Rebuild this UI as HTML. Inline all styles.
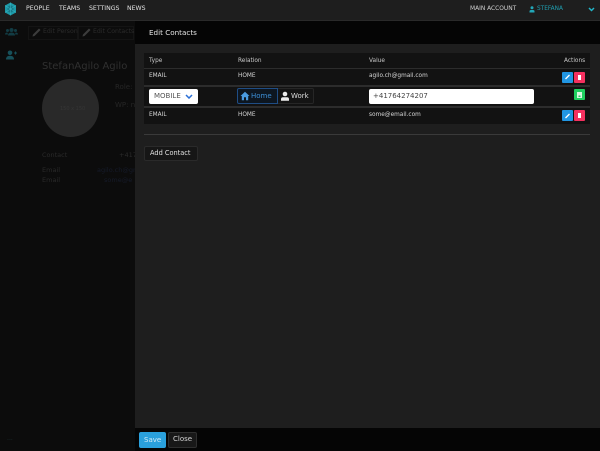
<!DOCTYPE html>
<html><head><meta charset="utf-8">
<style>
html,body{margin:0;padding:0;background:#0c0c0c}
#r{position:relative;width:600px;height:451px;overflow:hidden;background:#0c0c0c;font-family:"DejaVu Sans","Liberation Sans",sans-serif;color:#ddd}
#r div{position:absolute;white-space:nowrap}
.t{font-size:6.2px;line-height:10px;color:#d6d6d6}
svg{position:absolute;display:block}
</style></head><body>
<div id="r">
<!-- top bar -->
<div style="left:0;top:0;width:600px;height:20px;background:#1e1e1e"></div>
<div style="left:0;top:20px;width:600px;height:1px;background:#2a2a2a"></div>
<svg style="left:4px;top:2px" width="13" height="14" viewBox="0 0 13 14"><path d="M6.500 .5L12 3.500V10.500L6.500 13.500L1 10.500V3.500Z" fill="#1d9aa8"/><path d="M6.500 3L9.500 5V9L6.500 11L3.500 9V5Z" fill="#157a88"/><path d="M6.500 .5V13.500M1 3.500L12 10.500M12 3.500L1 10.500" stroke="#3fbccb" stroke-width=".5"/></svg>
<div class="t" style="left:26px;top:4px;color:#e2e2e2">PEOPLE</div>
<div class="t" style="left:59px;top:4px;color:#e2e2e2">TEAMS</div>
<div class="t" style="left:89px;top:4px;color:#e2e2e2">SETTINGS</div>
<div class="t" style="left:127px;top:4px;color:#e2e2e2">NEWS</div>
<div class="t" style="left:470px;top:4px;color:#d0d0d0;font-size:5.900px">MAIN ACCOUNT</div>
<svg style="left:529px;top:6px" width="6" height="7" viewBox="0 0 6 7"><circle cx="3" cy="1.800" r="1.500" fill="#22a7b8"/><path d="M.5 6.500V5.300Q.5 4 2 4H4Q5.500 4 5.500 5.300V6.500Z" fill="#22a7b8"/></svg>
<div class="t" style="left:537px;top:4px;color:#1f9fb0;font-size:5.800px">STEFANA</div>
<svg style="left:588px;top:7px" width="7" height="5" viewBox="0 0 7 5"><path d="M1 1L3.500 3.500L6 1" fill="none" stroke="#22b5c8" stroke-width="1.500"/></svg>

<!-- dimmed background page -->
<svg style="left:5px;top:27px" width="13" height="9" viewBox="0 0 13 9"><circle cx="6.500" cy="3" r="2" fill="#123c44"/><circle cx="2.500" cy="3.500" r="1.500" fill="#123c44"/><circle cx="10.500" cy="3.500" r="1.500" fill="#123c44"/><path d="M3 8.500Q3 5.500 6.500 5.500T10 8.500ZM0 7.500Q0 5.500 2.500 5.500L3 7.500ZM13 7.500Q13 5.500 10.500 5.500L10 7.500Z" fill="#123c44"/></svg>
<svg style="left:6px;top:50px" width="11" height="10" viewBox="0 0 11 10"><circle cx="4" cy="2.800" r="2.300" fill="#17505a"/><path d="M0 9.500Q0 5.800 4 5.800T8 9.500Z" fill="#17505a"/><path d="M8 3H11M9.500 1.500V4.500" stroke="#17505a"/></svg>
<div style="left:28px;top:26px;width:48px;height:12px;border:1px solid #141414"></div>
<div style="left:78px;top:26px;width:54px;height:12px;border:1px solid #141414"></div>
<svg style="left:31px;top:27px" width="11" height="11" viewBox="0 0 11 11"><path d="M2 7.500L8 1.500L9.500 3L3.500 9L1.500 9.500Z" fill="#3c3c3c"/></svg>
<svg style="left:81px;top:27px" width="11" height="11" viewBox="0 0 11 11"><path d="M2 7.500L8 1.500L9.500 3L3.500 9L1.500 9.500Z" fill="#3c3c3c"/></svg>
<div class="t" style="left:43px;top:27px;color:#2b2b2b">Edit Person</div>
<div class="t" style="left:93px;top:27px;color:#2b2b2b">Edit Contacts</div>
<div style="left:42px;top:60px;font-size:10px;line-height:14px;color:#303030">StefanAgilo Agilo</div>
<div style="left:42px;top:79px;width:57px;height:58px;border-radius:50%;background:#292929"></div>
<div style="left:60px;top:105px;font-size:5px;line-height:8px;color:#363636">150 x 150</div>
<div class="t" style="left:115px;top:82px;color:#262626;font-size:7px">Role: n</div>
<div class="t" style="left:115px;top:100px;color:#262626;font-size:7px">WP: n</div>
<div class="t" style="left:42px;top:150px;color:#2a2a2a;font-size:6.500px">Contact</div>
<div class="t" style="left:119px;top:150px;color:#2a2a2a;font-size:6.500px">+4176</div>
<div class="t" style="left:42px;top:165px;color:#2a2a2a;font-size:6.500px">Email</div>
<div class="t" style="left:42px;top:175px;color:#2a2a2a;font-size:6.500px">Email</div>
<div class="t" style="left:97px;top:165px;color:#161b2a;font-size:6.500px">agilo.ch@gm</div>
<div class="t" style="left:104px;top:175px;color:#161b2a;font-size:6.500px">some@e</div>
<div class="t" style="left:7px;top:434px;color:#1c3034">...</div>

<!-- modal -->
<div style="left:135px;top:21px;width:465px;height:23px;background:#050505"></div>
<div style="left:135px;top:44px;width:465px;height:384px;background:#1e1e1e"></div>
<div style="left:135px;top:428px;width:465px;height:23px;background:#050505"></div>
<div style="left:149px;top:27px;font-size:7.200px;line-height:11px;color:#e4e4e4">Edit Contacts</div>

<!-- table -->
<div style="left:144px;top:53px;width:446px;height:71px;background:#2c2c2c;border-radius:2px"></div>
<div style="left:144px;top:53px;width:446px;height:15px;background:#121212"></div>
<div style="left:144px;top:69px;width:446px;height:16px;background:#121212"></div>
<div style="left:144px;top:87px;width:446px;height:19px;background:#121212"></div>
<div style="left:144px;top:108px;width:446px;height:16px;background:#121212"></div>

<div class="t" style="left:149px;top:56px;font-size:5.800px;color:#c8c8c8">Type</div>
<div class="t" style="left:238px;top:56px;font-size:5.800px;color:#c8c8c8">Relation</div>
<div class="t" style="left:369px;top:56px;font-size:5.800px;color:#c8c8c8">Value</div>
<div class="t" style="left:564px;top:56px;font-size:5.800px;color:#c8c8c8">Actions</div>

<div class="t" style="left:149px;top:71px;font-size:5.800px">EMAIL</div>
<div class="t" style="left:238px;top:71px;font-size:5.800px">HOME</div>
<div class="t" style="left:369px;top:71px;font-size:5.800px">agilo.ch@gmail.com</div>
<div class="t" style="left:149px;top:110px;font-size:5.800px">EMAIL</div>
<div class="t" style="left:238px;top:110px;font-size:5.800px">HOME</div>
<div class="t" style="left:369px;top:110px;font-size:5.800px">some@email.com</div>

<!-- select -->
<div style="left:149px;top:89px;width:49px;height:15px;background:#fff;border-radius:2px"></div>
<div style="left:154px;top:91px;font-size:7px;line-height:11px;color:#555">MOBILE</div>
<svg style="left:185px;top:94px" width="8" height="5" viewBox="0 0 8 5"><path d="M1 1L4 4L7 1" fill="none" stroke="#2a6fd6" stroke-width="1.500"/></svg>

<!-- home/work -->
<div style="left:237px;top:88px;width:39px;height:14px;border:1px solid #1f4d85;border-radius:2px 0 0 2px;background:#0d1620"></div>
<div style="left:278px;top:88px;width:35px;height:14px;border:1px solid #262626;border-left:0;border-radius:0 2px 2px 0;background:#141414"></div>
<svg style="left:240px;top:91px" width="10" height="10" viewBox="0 0 10 10"><path d="M5 .8L9.500 5H8.200V9.300H6V6.300H4V9.300H1.800V5H.5Z" fill="#4a9be0"/></svg>
<div style="left:251px;top:91px;font-size:7px;line-height:11px;color:#3d8fd6">Home</div>
<svg style="left:280px;top:91px" width="10" height="11" viewBox="0 0 10 11"><circle cx="5" cy="3" r="2.300" fill="#eee"/><path d="M1 9.800V8.200Q1 6.200 3 6.200H7Q9 6.200 9 8.200V9.800Z" fill="#eee"/></svg>
<div style="left:291px;top:91px;font-size:7px;line-height:11px;color:#ddd">Work</div>

<!-- value input -->
<div style="left:369px;top:89px;width:165px;height:15px;background:#fff;border-radius:2px"></div>
<div style="left:373px;top:91px;font-size:7px;line-height:11px;color:#444">+41764274207</div>

<!-- action buttons -->
<div style="left:562px;top:72px;width:11px;height:11px;background:#2196e3;border-radius:1px"></div>
<div style="left:574px;top:72px;width:11px;height:11px;background:#f4305f;border-radius:1px"></div>
<svg style="left:564px;top:74px" width="7" height="6" viewBox="0 0 7 6"><path d="M1.500 5L5.500 1" stroke="#fff" stroke-width="1.300"/></svg>
<div style="left:578px;top:75px;width:3px;height:5px;background:#fff"></div>
<div style="left:574px;top:89px;width:11px;height:11px;background:#1fcf60;border-radius:1px"></div>
<svg style="left:576px;top:92px" width="7" height="6" viewBox="0 0 7 6"><path d="M1 0H6V6H1ZM2.500 3.500V5H4.500V3.500Z" fill="#d8f8e2" fill-rule="evenodd"/></svg>
<div style="left:562px;top:110px;width:11px;height:11px;background:#2196e3;border-radius:1px"></div>
<div style="left:574px;top:110px;width:11px;height:11px;background:#f4305f;border-radius:1px"></div>
<svg style="left:564px;top:113px" width="7" height="6" viewBox="0 0 7 6"><path d="M1.500 5L5.500 1" stroke="#fff" stroke-width="1.300"/></svg>
<div style="left:578px;top:113px;width:3px;height:5px;background:#fff"></div>

<div style="left:144px;top:134px;width:446px;height:1px;background:#3a3a3a"></div>

<!-- add contact -->
<div style="left:144px;top:146px;width:52px;height:13px;background:#161616;border:1px solid #2a2a2a;border-radius:2px"></div>
<div style="left:150px;top:147px;font-size:6.600px;line-height:12px;color:#e0e0e0">Add Contact</div>

<!-- footer buttons -->
<div style="left:139px;top:432px;width:27px;height:16px;background:#2aa0dc;border-radius:2px"></div>
<div style="left:144px;top:434px;font-size:7px;line-height:12px;color:#cfeaf7">Save</div>
<div style="left:168px;top:432px;width:27px;height:14px;background:#181818;border:1px solid #2e2e2e;border-radius:2px"></div>
<div style="left:173px;top:433px;font-size:7px;line-height:12px;color:#d5d5d5">Close</div>
</div>
</body></html>
